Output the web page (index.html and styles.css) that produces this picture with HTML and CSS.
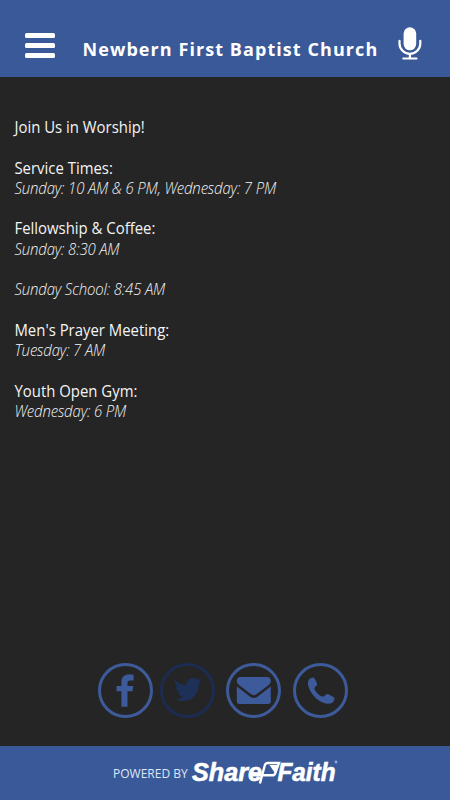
FILE: index.html
```html
<!DOCTYPE html>
<html lang="en">
<head>
    <meta charset="UTF-8">
    <meta name="viewport" content="width=device-width, initial-scale=1.0">
    <title>Newbern First Baptist Church</title>
    <link rel="stylesheet" href="styles.css">
</head>
<body>
    <header class="header">
        <button class="menu" aria-label="Menu">
            <span></span>
            <span></span>
            <span></span>
        </button>
        <h1>Newbern First Baptist Church</h1>
        <svg class="mic" width="24" height="34" viewBox="0 0 24 34">
            <rect x="5.6" y="0.3" width="12.6" height="23" rx="6.3" fill="#fff"/>
            <path d="M1.5 13.8v2.6a10.4 10.4 0 0 0 20.8 0v-2.6M11.9 27v4.5M5.3 31.5h13.2" fill="none" stroke="#fff" stroke-width="2.2" stroke-linecap="round"/>
        </svg>
    </header>

    <main class="content">
        <p>Join Us in Worship!</p>
        <p>Service Times:<br><em>Sunday: 10 AM &amp; 6 PM, Wednesday: 7 PM</em></p>
        <p>Fellowship &amp; Coffee:<br><em>Sunday: 8:30 AM</em></p>
        <p><em>Sunday School: 8:45 AM</em></p>
        <p>Men's Prayer Meeting:<br><em>Tuesday: 7 AM</em></p>
        <p>Youth Open Gym:<br><em>Wednesday: 6 PM</em></p>
    </main>

    <nav class="social">
        <a class="facebook" aria-label="Facebook">
            <svg viewBox="0 0 55 55">
                <path d="M35.6 11.8v5.6h-3.2c-2.4 0-2.9 1.1-2.9 2.8V23h5.8l-.7 5.2h-5.1v15.6h-6.1V28.2h-4.9V23h4.9v-4.2c0-4.8 3-7.4 7.3-7.4 2.1 0 4.2.2 4.9.4z"/>
            </svg>
        </a>
        <a class="twitter" aria-label="Twitter">
            <svg viewBox="0 0 55 55">
                <path d="M14.2 16c3.1 3.8 7.2 5.6 12.4 6 0-4.7 2.6-7.1 6.2-7.1 1.8 0 3.1.6 4.3 1.8l3.9-1.4-2.5 3.4 3.1-.8-2.9 3.1c.1 5.9-2 10.6-6 13.8-4.8 3.9-11.8 4.3-17.3 1.2 3.5.1 5.8-.7 8-2.5-3-.3-4.8-1.7-5.5-4.1l2.4-.1c-3-1.2-4.6-3.2-4.6-6l2.4.7c-2.7-2.2-3.3-5.2-3.9-8z"/>
            </svg>
        </a>
        <a class="mail" aria-label="Email">
            <svg viewBox="0 0 55 55">
                <path d="M14.5 14h26.5a3.8 3.8 0 0 1 3.8 3.8c0 2-1.2 3.5-2.8 4.6l-11.2 8.7c-1.8 1.4-4.2 1.4-6 0l-11.2-8.7c-1.6-1.1-2.8-2.6-2.8-4.6a3.8 3.8 0 0 1 3.7-3.8z"/>
                <path d="M10.8 23.3c.6.7 1.3 1.3 2.1 1.8l11.6 8.8c2 1.5 4.6 1.5 6.6 0l11.6-8.8c.8-.5 1.5-1.1 2.1-1.8v14.9a2.7 2.7 0 0 1-2.7 2.7H13.5a2.7 2.7 0 0 1-2.7-2.7z"/>
            </svg>
        </a>
        <a class="phone" aria-label="Phone">
            <svg viewBox="0 0 55 55">
                <path d="M16.3 16.2c1-1 3.1-1.8 4.3-1.6.9.2 3.2 5 3.6 6.4.4 1.5-2.8 2.9-2.8 4.4 0 2.3 5.6 8.2 8.7 8.2 1.7 0 2.7-2.9 4.4-2.5 1.4.4 6.5 3 6.9 4 .4 1.4-.7 3.6-1.9 4.5-1.3 1-3.9 1.3-5.4 1.1-6-.7-11.6-5.1-15-10-2.1-3-3.8-6.8-4.1-9.8-.2-1.7.2-3.6 1.3-4.7z"/>
            </svg>
        </a>
    </nav>

    <footer class="footer">
        <span>POWERED BY</span>
        <svg class="logo" width="150" height="40" viewBox="0 0 150 40">
            <text class="word" x="1" y="27" textLength="70" lengthAdjust="spacingAndGlyphs">Share</text>
            <text class="word" x="86.5" y="27" textLength="58" lengthAdjust="spacingAndGlyphs">Faith</text>
            <!-- flag between the two words -->
            <path d="M59 21.3h22.5q2.2 0 2.8-2.2L88 9H76.8q-2.2 0-2.9 2L68.9 29.5" fill="none" stroke="#fff" stroke-width="2.4"/>
            <path d="M78.5 11H87l-3.4 7.6z" fill="#fff"/>
            <circle class="mark" cx="145" cy="8" r="1.4"/>
        </svg>
    </footer>
</body>
</html>
```

FILE: styles.css
```css
* {
    box-sizing: border-box;
}
body {
    display: flex;
    flex-direction: column;
    height: 800px;
    margin: 0;
    background: #252525;
    color: #f4f4f4;
    font-family: "Open Sans", sans-serif;
}
.header {
    display: flex;
    height: 77px;
    padding: 27px 28px 0 25px;
    background: #3a5998;
}
.menu {
    display: flex;
    flex-direction: column;
    gap: 4.5px;
    width: 30px;
    margin-top: 6px;
    padding: 0;
    background: none;
    border: none;
}
.menu span {
    height: 5.3px;
    background: #fff;
    border-radius: 1.5px;
}
h1 {
    width: 315px;
    margin: 9px 0 0 27.5px;
    color: #fff;
    font-size: 18px;
    line-height: 26px;
    letter-spacing: 1.07px;
    white-space: nowrap;
}
.mic {
    flex: none;
}
.content {
    flex: 1;
    padding: 40px 15.5px 0;
    font-size: 16px;
    line-height: 20.3px;
    transform: scaleX(0.932);
    transform-origin: left;
}
.content p {
    margin: 0 0 20.3px;
}
.content em {
    font-weight: 330;
    letter-spacing: -0.15px;
}
.social {
    display: flex;
    height: 83px;
    padding-left: 98px;
}
.social a {
    width: 55px;
    height: 55px;
    border: 3px solid #3d5a9a;
    border-radius: 50%;
}
.social svg {
    display: block;
    width: 55px;
    height: 55px;
    margin: -3px;
    fill: #3d5a9a;
}
.social .twitter {
    margin: 0 11px 0 7px;
    border-color: #1c2c50;
}
.social .twitter svg {
    fill: #1c3058;
}
.social .phone {
    margin-left: 12px;
}
.footer {
    display: flex;
    height: 54px;
    padding: 8px 0 0 113px;
    background: #3a5998;
}
.footer span {
    width: 78px;
    padding-top: 10px;
    color: #dce6fa;
    font-size: 12px;
    line-height: 20px;
    white-space: nowrap;
}
.logo .word {
    fill: #fff;
    stroke: #fff;
    stroke-width: 0.6px;
    font: italic bold 25.5px "Liberation Sans", sans-serif;
}
.logo .mark {
    fill: #8fabe0;
}
```
